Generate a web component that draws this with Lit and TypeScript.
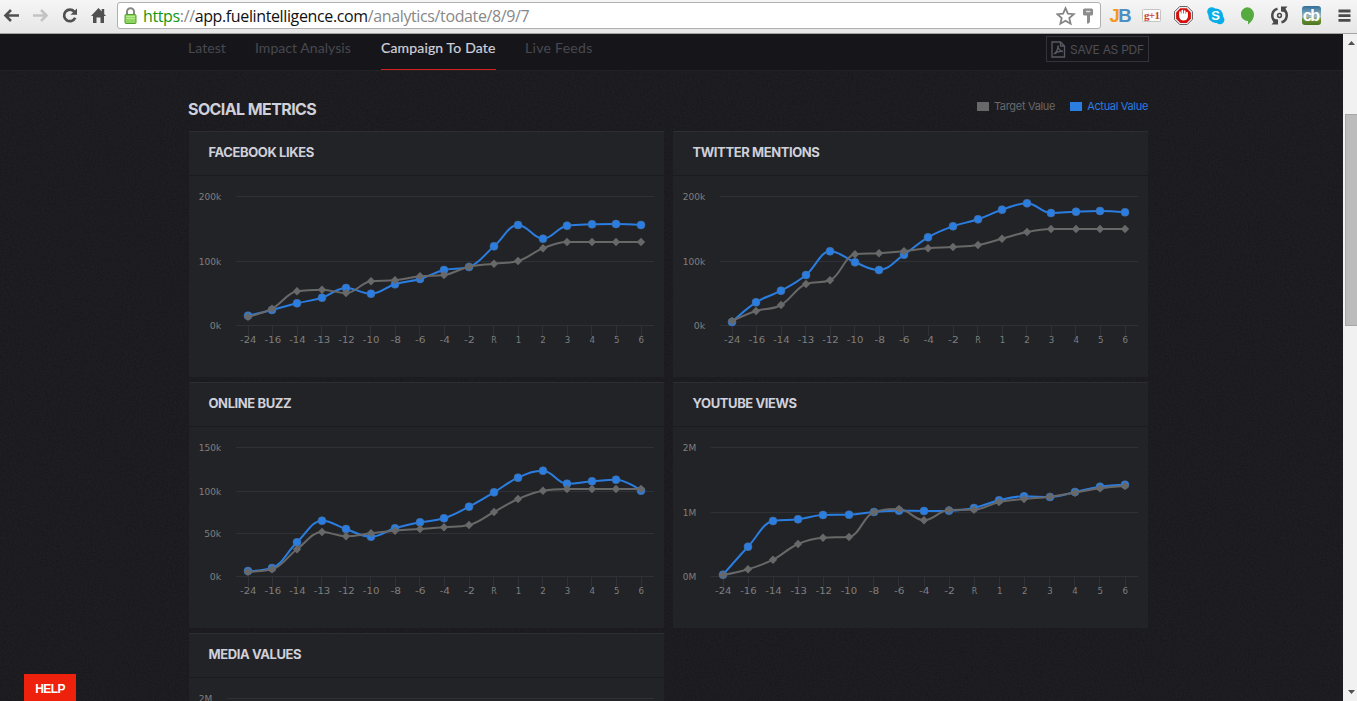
import { LitElement, html, svg, css } from "lit";
import { customElement, property } from "lit/decorators.js";

const LABELS = ["-24", "-16", "-14", "-13", "-12", "-10", "-8", "-6", "-4", "-2", "R", "1", "2", "3", "4", "5", "6"];

interface Tick { y: number; label: string; w: number; }
interface ChartData {
  title: string;
  left: number;
  first: number;
  ticks: Tick[];
  target: number[];
  actual: number[];
}

const THIRDS = (top: string, mid: string, low: string, w: number, w0: number): Tick[] => [
  { y: 65.5, label: top, w },
  { y: 130.5, label: mid, w },
  { y: 194.5, label: low, w: w0 },
];

const CHARTS: ChartData[] = [
  {
    title: "FACEBOOK LIKES", left: 47, first: 59,
    ticks: THIRDS("200k", "100k", "0k", 22.5, 11.5),
    actual: [184.7, 179, 172.3, 166.7, 157, 162.7, 153.3, 148, 139, 136, 115.3, 94, 107.7, 94.7, 93.3, 93, 94],
    target: [185.7, 177.7, 160.3, 158.7, 162, 150.3, 149.3, 145.3, 144, 135.7, 132.7, 130, 117.3, 111, 111, 111, 111],
  },
  {
    title: "TWITTER MENTIONS", left: 47, first: 59,
    ticks: THIRDS("200k", "100k", "0k", 22.5, 11.5),
    actual: [191, 171.3, 159.7, 144, 120.3, 131.3, 139, 123.7, 106.3, 95.3, 88.3, 78.7, 72.3, 82, 80.7, 80, 81.3],
    target: [190, 180, 174, 153, 149.3, 123.3, 122.3, 120.3, 117.3, 116, 114, 107.7, 101, 98, 98, 98, 98],
  },
  {
    title: "ONLINE BUZZ", left: 47, first: 59,
    ticks: [
      { y: 65.5, label: "150k", w: 22.5 },
      { y: 109.5, label: "100k", w: 22.5 },
      { y: 151.5, label: "50k", w: 17 },
      { y: 194.5, label: "0k", w: 11.5 },
    ],
    actual: [189, 186, 160.3, 138.7, 147, 154.7, 146.3, 140.3, 136.3, 124.7, 110.3, 95.7, 88.7, 101.7, 99.3, 97.7, 108.7],
    target: [189.7, 187.3, 167.3, 150, 154.3, 151.3, 148.7, 147, 145.3, 143, 130, 117, 108.7, 107, 107, 107, 107],
  },
  {
    title: "YOUTUBE VIEWS", left: 38, first: 50,
    ticks: THIRDS("2M", "1M", "0M", 13.5, 13.5),
    actual: [192.7, 164.7, 139, 137.3, 133, 132.7, 130, 128.7, 129, 128.7, 126, 118.3, 114.3, 115, 110, 104.7, 102.7],
    target: [193, 187.3, 177.7, 162, 155.7, 155, 130, 127, 138.3, 128, 127.7, 120, 117, 114.7, 110.7, 106.3, 104],
  },
  {
    title: "MEDIA VALUES", left: 38, first: 50,
    ticks: [{ y: 65.5, label: "2M", w: 13.5 }],
    actual: [], target: [],
  },
];

/** Smooth curve through the points, with flat extremes. */
function spline(pts: number[][]): string {
  if (!pts.length) return "";
  let d = `M${pts[0][0]} ${pts[0][1]}`;
  let cx = pts[0][0], cy = pts[0][1];
  for (let i = 1; i < pts.length; i++) {
    const [x, y] = pts[i];
    const [px, py] = pts[i - 1];
    let lx = x, ly = y, rx = x, ry = y;
    if (i < pts.length - 1) {
      const [nx, ny] = pts[i + 1];
      lx = (1.5 * x + px) / 2.5;
      ly = (1.5 * y + py) / 2.5;
      rx = (1.5 * x + nx) / 2.5;
      ry = (1.5 * y + ny) / 2.5;
      const c = ((ry - ly) * (rx - x)) / (rx - lx) + y - ry;
      ly += c;
      ry += c;
      if (ly > py && ly > y) { ly = Math.max(py, y); ry = 2 * y - ly; }
      else if (ly < py && ly < y) { ly = Math.min(py, y); ry = 2 * y - ly; }
      if (ry > ny && ry > y) { ry = Math.max(ny, y); ly = 2 * y - ry; }
      else if (ry < ny && ry < y) { ry = Math.min(ny, y); ly = 2 * y - ry; }
    }
    d += `C${cx} ${cy} ${lx} ${ly} ${x} ${y}`;
    cx = rx;
    cy = ry;
  }
  return d;
}

@customElement("metric-card")
export class MetricCard extends LitElement {
  @property({ attribute: false }) chart!: ChartData;

  static styles = css`
    :host { display: block; height: 246px; background: #222327; }
    .head {
      box-sizing: border-box; height: 45px; padding: 0 19.500px;
      border-top: 1px solid #2d2e33; border-bottom: 1px solid #1b1b1f;
      font: 700 13px/41px Inter, "Liberation Sans", sans-serif;
      letter-spacing: -0.4px; color: #d0d0da;
    }
    .plot { display: block; margin-top: -45px; }
    .grid { stroke: #303136; stroke-width: 1; fill: none; }
    .lab { font: 9px "DejaVu Sans", sans-serif; fill: #7f7f7d; }
    .act { stroke: #2a7de1; stroke-width: 2; fill: none; }
    .tgt { stroke: #686868; stroke-width: 2; fill: none; }
    .dot { fill: #2a7de1; stroke: #4a6d9b; stroke-width: 0.6; }
    .dia { fill: #686868; }
  `;

  render() {
    const c = this.chart;
    const step = (452 - c.first) / 16;
    const xs = LABELS.map((_, i) => c.first + i * step);
    const pair = (ys: number[]) => ys.map((y, i) => [Math.round(xs[i] - 0.08), y]);
    const act = pair(c.actual);
    const tgt = pair(c.target);
    const axis = act.length ? LABELS : [];
    return html`
      <div class="head">${c.title}</div>
      <svg class="plot" width="475" height="246" viewBox="0 0 475 246">
        ${c.ticks.map((t) => svg`
          <path class="grid" d="M${c.left} ${t.y}H465"/>
          <text class="lab" x=${c.left - 14.8 - t.w} y=${t.y + 3} textLength=${t.w} lengthAdjust="spacingAndGlyphs">${t.label}</text>`)}
        ${axis.map((l, i) => {
          const w = l.length === 3 ? 16.5 : l.length === 2 ? 10.6 : 5.5;
          return svg`
            <path class="grid" d="M${Math.round(xs[i] - 0.5) + 0.5} 194.5v10"/>
            <text class="lab" x=${xs[i] - w / 2 + 0.3} y="212" textLength=${w} lengthAdjust="spacingAndGlyphs">${l}</text>`;
        })}
        <path class="act" d=${spline(act)}/>
        ${act.map(([x, y]) => svg`<circle class="dot" cx=${x} cy=${y} r="4"/>`)}
        <path class="tgt" d=${spline(tgt)}/>
        ${tgt.map(([x, y]) => svg`<path class="dia" d="M${x} ${y - 4.2}l4.2 4.2l-4.2 4.2l-4.2 -4.2z"/>`)}
      </svg>
    `;
  }
}

@customElement("browser-bar")
export class BrowserBar extends LitElement {
  static styles = css`
    :host {
      display: flex; align-items: flex-start; box-sizing: border-box; height: 34px;
      background: linear-gradient(#f6f6f6, #e6e6e6); border-bottom: 1px solid #a3a3a3;
    }
    .nav { display: block; width: 117px; height: 33px; flex: none; }
    .field {
      box-sizing: border-box; display: flex; align-items: center; width: 984px; height: 27px; margin-top: 2px;
      padding: 0 4px 0 6px; background: #fff; border: 1px solid #b0b0b0; border-radius: 3px;
    }
    .lock { flex: none; width: 13px; height: 17px; margin-right: 6px; }
    .url { flex: 1; white-space: nowrap; font: 16px/24px "Open Sans", "Noto Sans", sans-serif; letter-spacing: -0.37px; color: #888; }
    .ok { color: #129612; }
    .host { color: #111; }
    .tools { display: block; width: 256px; height: 33px; flex: none; }
    .marks { flex: none; }
    .jb { font: 700 18.500px "Liberation Sans", sans-serif; letter-spacing: -1.5px; }
    .j { fill: #f39a1e; } .b { fill: #4b8fc4; }
    .g { font: 700 11px "Liberation Serif", serif; fill: #cf3f30; }
    .s { font: 700 13px "Liberation Sans", sans-serif; fill: #fff; }
    .cb { font: 700 16px "Liberation Sans", sans-serif; fill: #fff; }
  `;

  render() {
    return html`
      <svg class="nav" viewBox="0 0 117 33" fill="none">
        <path d="M5.500 15.500H19M11 10L5.500 15.500L11 21" stroke="#505050" stroke-width="2.600"/>
        <path d="M33 15.500H46.500M41 10L46.500 15.500L41 21" stroke="#c3c3c3" stroke-width="2.600"/>
        <path d="M74.300 11.600A5.800 5.800 0 1 0 75.200 17.800" stroke="#505050" stroke-width="2.700"/>
        <path d="M77 8.500V14.800H70.500z" fill="#505050"/>
        <path d="M98.500 8L106 16H104V23H100.500V17.500H96.500V23H93V16H91zM101.700 9H104.200V14H101.700z" fill="#505050"/>
      </svg>
      <div class="field">
        <svg class="lock" viewBox="0 0 13 17">
          <path d="M3 8V4.800a3.500 3.500 0 0 1 7 0V8" fill="none" stroke="#868686" stroke-width="2"/>
          <rect x="1" y="7.500" width="11" height="9" rx="1" fill="#8ed65f" stroke="#4fa02e"/>
          <path d="M2 9.500h9M2 11.500h9" stroke="#b7eb94"/>
        </svg>
        <div class="url"><span class="ok">https</span>://<span class="host">app.fuelintelligence.com</span>/analytics/todate/8/9/7</div>
        <svg class="marks" width="40" height="24" viewBox="0 0 40 24">
          <path d="M9.500 4.200L11.900 9.700L17.700 10.200L13.300 14L14.600 19.700L9.500 16.700L4.400 19.700L5.700 14L1.300 10.200L7.100 9.700z" fill="none" stroke="#858585" stroke-width="1.800"/>
          <path d="M28.500 4.500h7q1.500 0 1.500 1.500V10q0 1.500 -1.500 1.500H34V18L32.500 19.500H31V11.500H28.500q-1.500 0 -1.500 -1.500V6Q27 4.500 28.500 4.500z" fill="#8c8c8c"/>
          <path d="M30 7.500h4.500" stroke="#ddd" stroke-width="1.500"/>
        </svg>
      </div>
      <svg class="tools" viewBox="1101 0 256 33">
        <text class="jb" x="1109.500" y="22"><tspan class="j">J</tspan><tspan class="b">B</tspan></text>
        <rect x="1142.500" y="9.500" width="18" height="12" rx="1" fill="#fafafa" stroke="#c4c4c4"/>
        <text class="g" x="1144" y="18.500" textLength="16">g+1</text>
        <path d="M1179.700 6.500h7.600l5.200 5.200v7.600l-5.200 5.200h-7.600l-5.200-5.200v-7.600z" fill="#eee" stroke="#666"/>
        <path d="M1180.300 8.200h6.400l4.200 4.200v6.400l-4.200 4.200h-6.400l-4.200-4.200v-6.400z" fill="#d4110f"/>
        <path d="M1180 14.500v-2.500M1182.300 14v-3.500M1184.700 14v-3M1187 15v-2.500" stroke="#fff" stroke-width="1.700" stroke-linecap="round"/>
        <path d="M1179.200 13.500h8.700v3.500q-1 3.500 -4.300 3.500q-3.300 0 -4.400 -3.500z" fill="#fff"/>
        <circle cx="1215.700" cy="15.700" r="7.300" fill="#08aee9"/>
        <circle cx="1211.700" cy="11.700" r="4.500" fill="#08aee9"/><circle cx="1219.900" cy="19.700" r="4.500" fill="#08aee9"/>
        <text class="s" x="1211.300" y="20.400">S</text>
        <path d="M1247 7.300a7.100 7.100 0 0 1 7 7.200q0 5.500 -6 10v-3.500h-1a6.900 6.900 0 0 1 0 -13.700z" fill="#55ab3f"/>
        <path d="M1277.500 8.700A7 7 0 0 0 1275 21M1281.500 22.300A7 7 0 0 0 1284 10" fill="none" stroke="#4a4a4a" stroke-width="2.500"/>
        <path d="M1271.500 18.500l6.500 1v5h-6.500l2-2.200zM1287.500 12.500l-6.500 -1v-5h6.500l-2 2.200z" fill="#4a4a4a"/>
        <circle cx="1279.500" cy="15.500" r="1.900" fill="none" stroke="#4a4a4a" stroke-width="1.500"/>
        <defs><linearGradient id="sky" x2="0" y2="1"><stop offset="0" stop-color="#2f6f9b"/><stop offset=".55" stop-color="#9fb9c2"/><stop offset=".7" stop-color="#6c9136"/><stop offset="1" stop-color="#4d7420"/></linearGradient></defs>
        <rect x="1302" y="6" width="19" height="19" rx="3" fill="url(#sky)"/>
        <text class="cb" x="1303" y="20.500" textLength="17">cb</text>
        <path d="M1338.500 11h12M1338.500 15.700h12M1338.500 20.400h12" stroke="#4a4a4a" stroke-width="2.800"/>
      </svg>
    `;
  }
}

@customElement("app-root")
export class AppRoot extends LitElement {
  static styles = css`
    :host { display: flex; flex-direction: column; position: relative; width: 1357px; height: 701px; overflow: hidden; background: #1b1b1f; font-family: Inter, "Liberation Sans", sans-serif; }
    .body { display: flex; height: 667px; }
    .page { position: relative; width: 1343px; height: 667px; overflow: hidden; }
    .grain { position: absolute; inset: 0; width: 100%; height: 100%; opacity: 0.022; }
    .nav {
      position: relative; display: flex; box-sizing: border-box; height: 37px; padding-left: 188px;
      background: #16161a; border-bottom: 1px solid #212126;
    }
    .tab { box-sizing: border-box; height: 36px; margin-right: 29px; font: 400 14px/28px Lato, sans-serif; color: #484850; white-space: nowrap; letter-spacing: 0.05px; }
    .t1 { width: 38px; } .t2 { width: 97px; } .t3 { width: 115px; } .t4 { width: 67px; }
    .t4 { letter-spacing: 0.3px; }
    .on { color: #d0d0da; border-bottom: 1px solid #d3211d; letter-spacing: 0.15px; -webkit-text-stroke: 0.2px #d0d0da; }
    .pdf {
      box-sizing: border-box; display: flex; align-items: center; gap: 4px; width: 103px; height: 26px;
      margin: 2px 0 0 425px; padding-left: 4px; border: 1px solid #33333a; color: #4e4e57;
      font: 12px Inter, sans-serif; white-space: nowrap; letter-spacing: -0.28px;
    }
    .main { position: relative; width: 960px; margin-left: 188px; }
    .top { display: flex; height: 60px; align-items: flex-start; }
    .title { flex: 1; padding-top: 28px; font: 700 16px/20px Inter, sans-serif; letter-spacing: -0.6px; color: #d0d0da; }
    .key { display: flex; align-items: center; gap: 5px; padding-top: 27px; font: 11px/16px Inter, sans-serif; letter-spacing: -0.32px; color: #68686a; white-space: nowrap; }
    .key + .key { margin-left: 15px; color: #2a7de1; }
    .box { width: 12px; height: 9px; background: currentColor; }
    .cards { display: grid; grid-template-columns: 475px 475px; gap: 5px 9px; padding-left: 1px; }
    .help {
      position: absolute; left: 24px; bottom: 0; width: 52px; height: 27px; background: #ee220c; color: #fff;
      font: 700 12px/30px "Liberation Sans", sans-serif; letter-spacing: -0.6px; text-align: center;
    }
    .bar { width: 14px; height: 667px; }
    .bar svg { display: block; }
  `;

  render() {
    return html`
      <browser-bar></browser-bar>
      <div class="body">
        <div class="page">
          <svg class="grain">
            <filter id="n" x="0" y="0" width="100%" height="100%">
              <feTurbulence type="fractalNoise" baseFrequency="0.6" numOctaves="2" seed="4"/>
              <feColorMatrix values="1.2 0 0 0 -.45  1.2 0 0 0 -.45  1.2 0 0 0 -.45  0 0 0 0 1"/>
            </filter>
            <rect width="100%" height="100%" filter="url(#n)"/>
          </svg>
          <div class="nav">
            <div class="tab t1">Latest</div>
            <div class="tab t2">Impact Analysis</div>
            <div class="tab t3 on">Campaign To Date</div>
            <div class="tab t4">Live Feeds</div>
            <div class="pdf">
              <svg width="15" height="17" viewBox="0 0 15 17" fill="none" stroke="#5a5a64" stroke-width="1.300">
                <path d="M1 1H9.500L13.500 5V16H1zM9.500 1V5H13.500"/>
                <path d="M3 13Q7 10 7 4.500Q7 9.500 12 10.500Q7 9.500 3 13"/>
              </svg>
              <span>SAVE AS PDF</span>
            </div>
          </div>
          <div class="main">
            <div class="top">
              <div class="title">SOCIAL METRICS</div>
              <div class="key"><div class="box"></div><span>Target Value</span></div>
              <div class="key"><div class="box"></div><span>Actual Value</span></div>
            </div>
            <div class="cards">${CHARTS.map((c) => html`<metric-card .chart=${c}></metric-card>`)}</div>
          </div>
          <div class="help">HELP</div>
        </div>
        <div class="bar">
          <svg width="14" height="667" viewBox="0 34 14 667">
            <rect y="34" width="14" height="667" fill="#f1f1f1"/>
            <path d="M5 45L8.500 41L12 45z" fill="#505050"/>
            <rect x="2.500" y="114.500" width="12" height="211" fill="#bcbcbc" stroke="#a8a8a8"/>
            <path d="M5 690L8.500 694L12 690z" fill="#505050"/>
          </svg>
        </div>
      </div>
    `;
  }
}
